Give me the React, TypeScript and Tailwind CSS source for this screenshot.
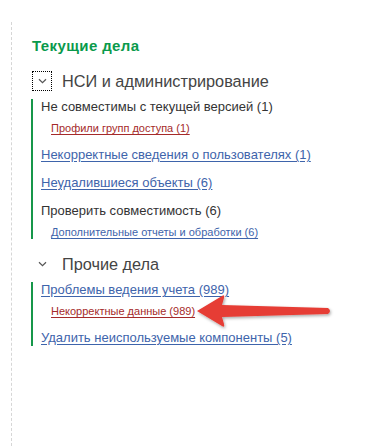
import React from "react";

type Item = {
  text: string;
  kind: "plain" | "link";
  sub?: { text: string; tone: "red" | "blue" };
};

const adminItems: Item[] = [
  { text: "Не совместимы с текущей версией (1)", kind: "plain", sub: { text: "Профили групп доступа (1)", tone: "red" } },
  { text: "Некорректные сведения о пользователях (1)", kind: "link" },
  { text: "Неудалившиеся объекты (6)", kind: "link" },
  { text: "Проверить совместимость (6)", kind: "plain", sub: { text: "Дополнительные отчеты и обработки (6)", tone: "blue" } },
];

const otherItems: Item[] = [
  { text: "Проблемы ведения учета (989)", kind: "link", sub: { text: "Некорректные данные (989)", tone: "red" } },
  { text: "Удалить неиспользуемые компоненты (5)", kind: "link" },
];

const Chevron = () => (
  <svg width="9" height="6" viewBox="0 0 9 6" className="text-[#555]">
    <path d="M1 1.2 L4.5 4.6 L8 1.2" fill="none" stroke="currentColor" strokeWidth="1.2" />
  </svg>
);

const GroupHeader = ({ title, focused }: { title: string; focused?: boolean }) => (
  <div className="flex items-center gap-[10px]">
    <div
      className={
        focused
          ? "flex h-[20px] w-[20px] items-center justify-center border border-dotted border-black"
          : "flex h-[20px] w-[20px] items-center justify-center"
      }
    >
      <Chevron />
    </div>
    <span className="text-[16.3px] leading-[20px] text-[#444]">{title}</span>
  </div>
);

const ItemRow = ({ item }: { item: Item }) => (
  <div className="flex flex-col">
    {item.kind === "link" ? (
      <a className="text-[13px] leading-[16px] text-[#3e64ab] underline underline-offset-2">{item.text}</a>
    ) : (
      <span className="text-[13px] leading-[16px] text-[#333]">{item.text}</span>
    )}
    {item.sub && (
      <a
        className={
          item.sub.tone === "red"
            ? "mt-[7px] ml-[10px] text-[11px] leading-[13px] text-[#a52a2a] underline underline-offset-2"
            : "mt-[7px] ml-[10px] text-[11px] leading-[13px] text-[#3e64ab] underline underline-offset-2"
        }
      >
        {item.sub.text}
      </a>
    )}
  </div>
);

const ItemList = ({ items }: { items: Item[] }) => (
  <div className="mt-[8px] ml-[-1px] flex flex-col gap-[12px] border-l-2 border-[#16974a] pl-[8px]">
    {items.map((item) => (
      <ItemRow key={item.text} item={item} />
    ))}
  </div>
);

export default function App() {
  return (
    <div className="relative h-[446px] w-[376px] overflow-hidden bg-white font-['Liberation_Sans',Arial,sans-serif]">
      <div className="ml-[11px] mt-[22px] h-[424px] border-l border-dashed border-[#d6d6d6] pl-[20px] pt-[15px]">
        <h2 className="text-[15px] font-bold leading-[17px] tracking-[0.4px] text-[#0a9a4c]">Текущие дела</h2>

        <div className="mt-[17px]">
          <GroupHeader title="НСИ и администрирование" focused />
          <ItemList items={adminItems} />
        </div>

        <div className="mt-[15px]">
          <GroupHeader title="Прочие дела" />
          <ItemList items={otherItems} />
        </div>
      </div>

      {/* red pointer arrow */}
      <svg className="absolute left-[192px] top-[293px]" width="145" height="40" viewBox="0 0 145 40">
        <defs>
          <filter id="sh" x="-10%" y="-30%" width="120%" height="160%">
            <feDropShadow dx="1" dy="1.5" stdDeviation="1.5" floodColor="#000" floodOpacity="0.35" />
          </filter>
        </defs>
        <path
          d="M5 18 L30 3 Q33 1 32 5 L30 12 L136 15 Q140 18 136 21 L30 24 L32 31 Q33 35 30 33 Z"
          fill="#e63c34"
          filter="url(#sh)"
        />
      </svg>
    </div>
  );
}
